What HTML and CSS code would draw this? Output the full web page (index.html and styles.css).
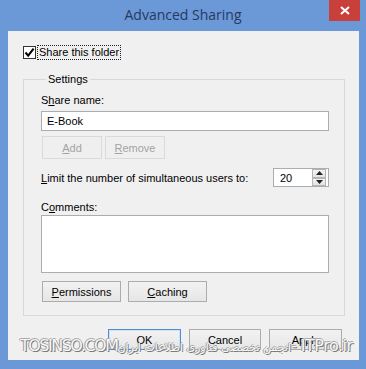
FILE: index.html
```html
<!DOCTYPE html>
<html>
<head>
<meta charset="utf-8">
<link rel="stylesheet" href="styles.css">
</head>
<body>
<div class="window">
  <div class="titlebar">
    <span></span>
    <div class="title">Advanced Sharing</div>
    <div class="close"><svg width="10" height="9" viewBox="0 0 10 9"><path d="M1 1 L9 8 M9 1 L1 8" stroke="#fff" stroke-width="2"/></svg></div>
  </div>
  <div class="client">
    <div class="share-row">
      <span class="checkbox"><svg width="11" height="11" viewBox="0 0 11 11"><path d="M1.5 5.5 L4.2 8.6 L9.6 1.6" fill="none" stroke="#000" stroke-width="2"/></svg></span>
      <span class="focus-text">Share this folder</span>
    </div>
    <fieldset class="group">
      <legend>Settings</legend>
      <div class="label first">S<u>h</u>are name:</div>
      <div class="textbox">E-Book</div>
      <div class="btn-row">
        <div class="btn disabled w60"><u>A</u>dd</div>
        <div class="btn disabled w60"><u>R</u>emove</div>
      </div>
      <div class="limit-row">
        <div class="label"><u>L</u>imit the number of simultaneous users to:</div>
        <div class="spinner">
          <span class="spin-value">20</span>
          <span class="spin-btns">
            <span class="spin-btn"><svg width="7" height="4" viewBox="0 0 7 4"><path d="M0 4 L3.5 0 L7 4Z" fill="#222"/></svg></span>
            <span class="spin-btn"><svg width="7" height="4" viewBox="0 0 7 4"><path d="M0 0 L3.5 4 L7 0Z" fill="#222"/></svg></span>
          </span>
        </div>
      </div>
      <div class="label comments">C<u>o</u>mments:</div>
      <div class="textarea"></div>
      <div class="btn-row perms">
        <div class="btn w79"><u>P</u>ermissions</div>
        <div class="btn w79"><u>C</u>aching</div>
      </div>
    </fieldset>
    <div class="footer">
      <div class="btn default w73">OK</div>
      <div class="btn w72">Cancel</div>
      <div class="btn w73">Apply</div>
    </div>
  </div>
  <div class="watermark">
    <span class="wm-left">TOSINSO.COM</span>
    <span class="wm-right"><span class="wm-fa" dir="rtl">انجمن تخصصی فناوری اطلاعات ایران</span><span class="wm-en"> - ITPro.ir</span></span>
  </div>
</div>
</body>
</html>
```
FILE: styles.css
```css
* { box-sizing: border-box; }
html, body { margin: 0; padding: 0; }
body {
  width: 366px;
  height: 369px;
  overflow: hidden;
  font-family: "Liberation Sans", Arial, sans-serif;
  font-size: 11px;
  color: #000;
}
.window {
  position: relative;
  width: 366px;
  height: 369px;
  background: #6b98d6;
  display: flex;
  flex-direction: column;
}
.titlebar {
  height: 31px;
  display: grid;
  grid-template-columns: 1fr auto 1fr;
  align-items: start;
}
.title {
  font-family: "Open Sans", "Noto Sans", sans-serif;
  font-size: 14px;
  color: #263a63;
  line-height: 30px;
}
.close {
  justify-self: end;
  margin-right: 6px;
  width: 31px;
  height: 21px;
  background: #c9403a;
  display: flex;
  align-items: center;
  justify-content: center;
}
.client {
  margin: 0 7px 0 8px;
  height: 329px;
  background: #f0f0f0;
  padding: 15px 0 0 15px;
}
.share-row {
  display: flex;
  align-items: center;
  height: 13px;
}
.checkbox {
  width: 13px;
  height: 13px;
  border: 1px solid #333;
  background: #fff;
  display: flex;
  align-items: center;
  justify-content: center;
}
.focus-text {
  margin-left: 2px;
  outline: 1px dotted #222;
  padding: 0 1px;
  line-height: 13px;
}
.group {
  margin: 13px 0 0 0;
  width: 322px;
  height: 244px;
  border: 1px solid #d8d8d8;
  padding: 0 15px 0 17px;
}
.group legend {
  padding: 0 2px;
  margin-left: 5px;
  line-height: 14px;
}
.label {
  line-height: 16px;
}
.label.first {
  margin-top: 6px;
}
.textbox {
  margin-top: 3px;
  height: 20px;
  border: 1px solid #abadb3;
  background: #fff;
  padding: 0 5px;
  line-height: 18px;
}
.btn-row {
  display: flex;
  gap: 3px;
  margin-top: 5px;
  padding-left: 1px;
}
.btn {
  height: 23px;
  border: 1px solid #acacac;
  background: linear-gradient(#f2f2f2, #e6e6e6);
  display: flex;
  align-items: center;
  justify-content: center;
}
.btn.disabled {
  border-color: #dadada;
  background: #efefef;
  color: #a3a3a3;
}
.w60 { width: 60px; }
.w79 { width: 79px; }
.w72 { width: 72px; }
.w73 { width: 73px; }
.limit-row {
  margin-top: 9px;
  display: flex;
  align-items: center;
  justify-content: space-between;
  height: 19px;
}
.spinner {
  width: 56px;
  height: 19px;
  border: 1px solid #abadb3;
  background: #fff;
  display: flex;
  align-items: center;
  justify-content: space-between;
  padding: 0 2px 0 6px;
}
.spin-btns {
  display: flex;
  flex-direction: column;
  width: 14px;
  height: 17px;
}
.spin-btn {
  flex: 1;
  border: 1px solid #b5b5b5;
  background: linear-gradient(#f4f4f4, #e3e3e3);
  display: flex;
  align-items: center;
  justify-content: center;
}
.label.comments {
  margin-top: 13px;
  line-height: 14px;
}
.textarea {
  margin-top: 1px;
  height: 58px;
  border: 1px solid #abadb3;
  background: #fff;
}
.btn-row.perms {
  margin-top: 8px;
  gap: 7px;
}
.btn-row.perms .btn { height: 21px; }
.footer {
  display: flex;
  gap: 8px;
  margin-top: 13px;
  padding-left: 85px;
}
.footer .btn { height: 21px; }
.btn.default {
  border-color: #4f8bd6;
  box-shadow: inset 0 0 0 1px #cfe3f7;
}
.watermark {
  position: absolute;
  left: 20px;
  right: 21px;
  top: 336px;
  display: flex;
  justify-content: space-between;
  align-items: flex-end;
  white-space: nowrap;
  pointer-events: none;
  font-family: "DejaVu Sans", "Noto Sans", sans-serif;
  color: #f7f7f7;
  text-shadow: 1px 1px 0 #7a7a7a, -1px 0 0 #9a9a9a, 0 -1px 0 #aaa;
}
.wm-left { font-size: 16px; letter-spacing: -1.5px; }
.wm-right { display: flex; align-items: baseline; }
.wm-fa { font-size: 11px; letter-spacing: -0.3px; }
.wm-en { font-size: 16px; letter-spacing: -0.5px; }
```
